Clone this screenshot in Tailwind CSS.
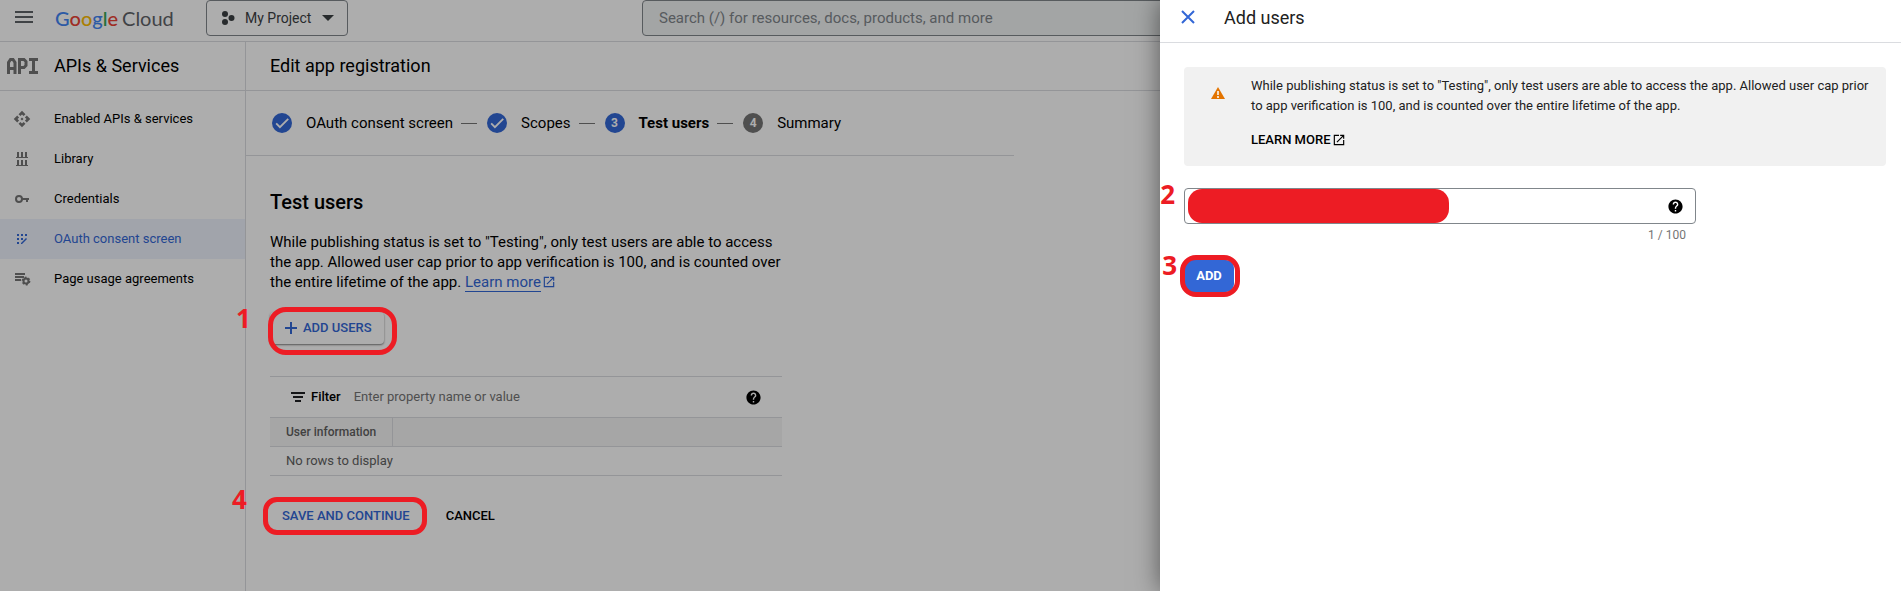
<!DOCTYPE html>
<html lang="en">
<head>
<meta charset="utf-8">
<title>Edit app registration – APIs &amp; Services – Google Cloud</title>
<script src="https://cdn.jsdelivr.net/npm/@tailwindcss/browser@4"></script>
</head>
<body class="relative min-h-screen overflow-x-hidden bg-white font-[Roboto,'Liberation_Sans',sans-serif] text-[13px] text-black">

<svg class="hidden" aria-hidden="true">
  <symbol id="help" viewBox="0 0 24 24"><path d="M12 2C6.480 2 2 6.480 2 12s4.480 10 10 10 10-4.480 10-10S17.520 2 12 2zm1 17h-2v-2h2v2zm2.070-7.750-.9.920C13.450 12.900 13 13.500 13 15h-2v-.5c0-1.100.45-2.100 1.170-2.830l1.240-1.260c.37-.36.59-.86.59-1.410 0-1.100-.9-2-2-2s-2 .9-2 2H8c0-2.210 1.790-4 4-4s4 1.790 4 4c0 .88-.36 1.680-.93 2.250z" fill="currentColor"/></symbol>
  <symbol id="open" viewBox="0 0 24 24"><path d="M19 19H5V5h7V3H3v18h18v-9h-2v7zM14 3v2h3.590l-9.830 9.830 1.410 1.410L19 6.410V10h2V3h-7z" fill="currentColor"/></symbol>
  <symbol id="check" viewBox="0 0 24 24"><circle cx="12" cy="12" r="12" fill="#3367d6"/><path d="M5 12.500l4.500 4.500L19.500 7" fill="none" stroke="#fff" stroke-width="2.200"/></symbol>
</svg>

<div class="flex min-h-screen flex-col">
  <header class="flex h-[42px] items-start border-b border-[#dadce0]">
    <button aria-label="Main menu" class="ml-[15px] mt-[11px] flex w-[18px] flex-col gap-[3px]">
      <span class="h-[2px] w-full bg-[#5f6368]"></span><span class="h-[2px] w-full bg-[#5f6368]"></span><span class="h-[2px] w-full bg-[#5f6368]"></span>
    </button>
    <a href="#" class="ml-[22px] flex h-[35px] w-[151px] items-center gap-1 font-[Lato,sans-serif] text-[20px]">
      <span class="font-medium"><span class="text-[#4285f4]">G</span><span class="text-[#ea4335]">o</span><span class="text-[#fbbc04]">o</span><span class="text-[#4285f4]">g</span><span class="text-[#34a853]">l</span><span class="text-[#ea4335]">e</span></span>
      <span class="text-[#5f6368]">Cloud</span>
    </a>
    <button class="flex h-[36px] w-[142px] items-center rounded border border-[#80868b] pl-[14px] text-sm text-[#3c4043]">
      <svg class="size-[14px]" viewBox="0 0 14 14" fill="#3c4043"><circle cx="4" cy="3" r="3"/><circle cx="4" cy="11" r="3"/><circle cx="10.500" cy="7" r="3"/></svg>
      <span class="ml-[10px]">My Project</span>
      <svg class="ml-[11px] h-[6px] w-[12px]" viewBox="0 0 12 6"><path d="M0 0h12L6 6z" fill="#3c4043"/></svg>
    </button>
    <input type="search" aria-label="Search" placeholder="Search (/) for resources, docs, products, and more" class="ml-[294px] h-[36px] min-w-0 flex-1 rounded border border-[#80868b] bg-[#f1f3f4] px-4 text-[15px] placeholder:text-[#80868b]">
  </header>

  <div class="flex flex-1">
    <nav class="w-[246px] shrink-0 border-r border-[#dadce0]">
      <div class="flex h-[49px] items-center border-b border-[#dadce0] pl-[7px]">
        <svg class="h-[16px] w-[31px]" viewBox="0 0 31 16" fill="none" stroke="#757575" stroke-width="3"><path d="M1.500 16V4.500L3.500 1.500H6L8 4.500V16M1.500 10.500H8M12.500 16V1.500H17L19 3.500V7.500L17 9.500H12.500M22 1.500H31M26.500 1.500V14.500M22 14.500H31"/></svg>
        <h2 class="ml-4 text-lg">APIs &amp; Services</h2>
      </div>
      <ul class="pt-2">
        <li><a href="#" class="flex h-10 items-center gap-[23px] pl-[13px]">
          <svg class="size-[18px]" viewBox="0 0 24 24" fill="#757575"><path d="M14 12l-2 2-2-2 2-2 2 2zm-2-6l2.120 2.120 2.500-2.500L12 1 7.380 5.620l2.500 2.500L12 6zm-6 6l2.120-2.120-2.500-2.500L1 12l4.620 4.620 2.500-2.500L6 12zm12 0l-2.120 2.120 2.500 2.500L23 12l-4.620-4.620-2.500 2.500L18 12zm-6 6l-2.120-2.120-2.500 2.500L12 23l4.620-4.620-2.500-2.500L12 18z"/></svg>Enabled APIs &amp; services</a></li>
        <li><a href="#" class="flex h-10 items-center gap-[23px] pl-[13px]">
          <svg class="size-[18px]" viewBox="0 0 18 18" fill="#757575"><path d="M4 2h2v5h2V2h2v5h2V2h2v5h1v1H3V7h1zM4 10h2v5h2v-5h2v5h2v-5h2v5h1v1H3v-1h1z"/></svg>Library</a></li>
        <li><a href="#" class="flex h-10 items-center gap-[23px] pl-[13px]">
          <svg class="size-[18px]" viewBox="0 0 18 18"><circle cx="6" cy="9" r="3" fill="none" stroke="#757575" stroke-width="2"/><path d="M9 8h7v2h-1v2h-2v-2H9z" fill="#757575"/></svg>Credentials</a></li>
        <li><a href="#" aria-current="page" class="flex h-10 items-center gap-[23px] bg-[#eef2fc] pl-[13px] text-[#3367d6]">
          <svg class="size-[18px]" viewBox="0 0 18 18" fill="#3367d6"><path d="M4 4h2v2H4zM8 4h2v2H8zM12 4h2v2h-2zM4 8h2v2H4zM8 8h2v2H8zM4 12h2v2H4zM13 8l1 1-5 5H8v-1z"/></svg>OAuth consent screen</a></li>
        <li><a href="#" class="flex h-10 items-center gap-[23px] pl-[13px]">
          <svg class="size-[18px]" viewBox="0 0 18 18" fill="#757575"><path d="M2 3h10v2H2zM2 6h9v2H2zM2 9h6v2H2z"/><circle cx="13" cy="11" r="2.500" fill="none" stroke="#757575" stroke-width="2"/><circle cx="13" cy="11" r="3.700" fill="none" stroke="#757575" stroke-width="1.400" stroke-dasharray="2 1.870"/></svg>Page usage agreements</a></li>
      </ul>
    </nav>

    <main class="min-w-0 flex-1">
      <h1 class="flex h-[49px] items-center border-b border-[#dadce0] pl-6 text-lg">Edit app registration</h1>
      <ol class="flex h-[65px] w-[768px] items-center border-b border-[#dadce0] pl-[26px] text-[15px]">
        <li class="flex items-center"><svg class="size-5"><use href="#check"/></svg><span class="ml-[14px]">OAuth consent screen</span><span class="mr-[10px] ml-2 h-px w-4 bg-[#757575]"></span></li>
        <li class="flex items-center"><svg class="size-5"><use href="#check"/></svg><span class="ml-[14px]">Scopes</span><span class="mr-[10px] ml-2 h-px w-4 bg-[#757575]"></span></li>
        <li class="flex items-center"><span class="flex size-5 items-center justify-center rounded-full bg-[#3367d6] text-xs font-bold text-white">3</span><span class="ml-[14px] font-bold">Test users</span><span class="mr-[10px] ml-2 h-px w-4 bg-[#757575]"></span></li>
        <li class="flex items-center"><span class="flex size-5 items-center justify-center rounded-full bg-[#757575] text-xs font-bold text-white">4</span><span class="ml-[14px]">Summary</span></li>
      </ol>

      <section class="ml-6 w-[512px]">
        <h2 class="mt-8 text-xl leading-7 font-medium">Test users</h2>
        <p class="mt-4 text-[15px] leading-5">While publishing status is set to "Testing", only test users are able to access the app. Allowed user cap prior to app verification is 100, and is counted over the entire lifetime of the app. <a href="#" class="text-[#3367d6]"><span class="border-b border-[#3367d6]">Learn more</span><svg class="ml-px inline size-[14px] align-[-2px]"><use href="#open"/></svg></a></p>
        <button class="mt-5 flex h-8 w-[114px] items-center rounded-sm pl-[15px] font-medium text-[#3367d6] shadow-[0_1px_2px_rgb(0_0_0/0.5)]">
          <svg class="mr-[6px] size-3" viewBox="0 0 12 12"><path d="M6 0v12M0 6h12" stroke="#3367d6" stroke-width="2"/></svg>ADD USERS
        </button>
        <div class="mt-8 flex h-[41px] items-center border-t border-[#dadce0] pr-5 pl-[21px]">
          <svg class="size-[14px]" viewBox="0 0 14 14"><path d="M0 3h14M2 7h10M4 11h6" stroke="#202124" stroke-width="2"/></svg>
          <label for="filter" class="ml-[6px] font-medium">Filter</label>
          <input id="filter" type="text" placeholder="Enter property name or value" class="ml-[13px] min-w-0 flex-1 placeholder:text-[#757575]">
          <button aria-label="Filter help"><svg class="size-[17px]"><use href="#help"/></svg></button>
        </div>
        <table class="w-full border-collapse text-left leading-5">
          <thead><tr class="h-[29px] border-y border-[#dadce0] bg-[#f5f5f5] text-xs text-[#616161]"><th class="w-[122px] border-r border-[#dadce0] p-0 pl-4 font-medium">User information</th><th class="p-0"></th></tr></thead>
          <tbody><tr class="h-[29px] border-b border-[#dadce0] text-[#616161]"><td colspan="2" class="p-0 pl-4">No rows to display</td></tr></tbody>
        </table>
        <div class="mt-[22px] flex h-9 items-center gap-9 pl-3 font-medium">
          <button class="text-[#3367d6]">SAVE AND CONTINUE</button>
          <button>CANCEL</button>
        </div>
      </section>
    </main>
  </div>
</div>

<div class="absolute inset-0 bg-black/32"></div>

<aside class="absolute inset-y-0 right-0 w-[741px] bg-white shadow-[0_0_24px_rgb(0_0_0/0.5)]">
  <header class="flex h-[43px] items-start border-b border-[#dadce0] pl-[21px]">
    <button aria-label="Close" class="mt-[10px]"><svg class="size-[14px]" viewBox="0 0 14 14"><path d="M1 1l12 12M13 1L1 13" stroke="#3367d6" stroke-width="2"/></svg></button>
    <h2 class="ml-[29px] mt-1 text-lg text-[#212121]">Add users</h2>
  </header>
  <div class="mt-6 mr-[15px] ml-6 flex h-[99px] rounded bg-[#f1f1f1] pl-[27px] text-[#212121]">
    <svg class="mt-5 size-[14px] shrink-0" viewBox="0 0 14 14"><path d="M7 0l7 12H0z" fill="#e37400"/><path d="M7 4v4M7 9v2" stroke="#fff" stroke-width="1.500"/></svg>
    <div class="ml-[26px] pt-[9px] pr-3">
      <p class="leading-5">While publishing status is set to "Testing", only test users are able to access the app. Allowed user cap prior to app verification is 100, and is counted over the entire lifetime of the app.</p>
      <a href="#" class="mt-[14px] flex items-center gap-[2px] leading-5 font-medium text-black">LEARN MORE <svg class="size-[14px]"><use href="#open"/></svg></a>
    </div>
  </div>
  <div class="mt-[22px] ml-6 w-[512px]">
    <div class="flex h-9 items-center rounded border border-[#80868b] pr-[11px] pl-[3px]">
      <span class="h-[34px] w-[261px] rounded-[14px] bg-[#ed1c24]"></span>
      <input type="email" aria-label="User email" class="min-w-0 flex-1">
      <button aria-label="Email help"><svg class="size-[17px]"><use href="#help"/></svg></button>
    </div>
    <p class="pr-[10px] text-right text-xs leading-[22px] text-[#757575]">1 / 100</p>
  </div>
  <button class="mt-[14px] ml-6 h-8 w-[50px] rounded-lg bg-[#3367d6] font-bold text-white">ADD</button>
</aside>

<!-- Numbered step markers laid over the page -->
<div class="pointer-events-none absolute inset-0 font-['Open_Sans','Noto_Sans',sans-serif] text-[26px] leading-7 font-bold text-[#ed1c24]">
  <span class="absolute top-[304px] left-[236px]">1</span>
  <span class="absolute top-[307px] left-[268px] h-[48px] w-[129px] rounded-[18px] border-5 border-[#ed1c24]"></span>
  <span class="absolute top-[485px] left-[232px]">4</span>
  <span class="absolute top-[497px] left-[263px] h-[38px] w-[164px] rounded-[14px] border-5 border-[#ed1c24]"></span>
  <span class="absolute top-[180px] right-[726px]">2</span>
  <span class="absolute top-[251px] right-[724px]">3</span>
  <span class="absolute top-[255px] right-[661px] h-[42px] w-[60px] rounded-[16px] border-5 border-[#ed1c24]"></span>
</div>
</body>
</html>
